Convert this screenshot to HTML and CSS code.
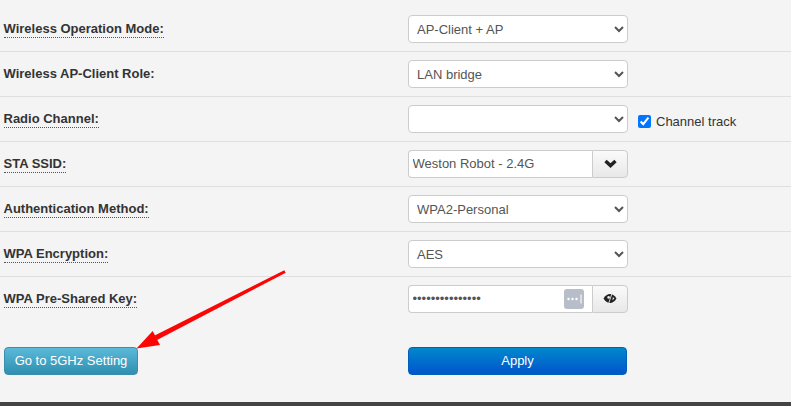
FILE: index.html
```html
<!DOCTYPE html>
<html lang="en">
<head>
<meta charset="utf-8">
<title>Wireless Settings</title>
<link rel="stylesheet" href="styles.css">
</head>
<body>
<main class="panel">
  <form class="form">
    <div class="row">
      <label class="label"><span class="hint">Wireless Operation Mode:</span></label>
      <div class="field"><select class="control"><option>AP-Client + AP</option></select></div>
    </div>
    <div class="row">
      <label class="label">Wireless AP-Client Role:</label>
      <div class="field"><select class="control"><option>LAN bridge</option></select></div>
    </div>
    <div class="row">
      <label class="label"><span class="hint">Radio Channel:</span></label>
      <div class="field">
        <select class="control"><option></option></select>
        <label class="check"><input type="checkbox" checked>Channel track</label>
      </div>
    </div>
    <div class="row">
      <label class="label"><span class="hint">STA SSID:</span></label>
      <div class="field">
        <div class="group">
          <input class="group-input" type="text" value="Weston Robot - 2.4G">
          <button type="button" class="addon" aria-label="Show networks">
            <svg width="13" height="9" viewBox="0 0 13 9"><path d="M1.500 2 L6.500 6.600 L11.500 2" fill="none" stroke="#222" stroke-width="3.400"/></svg>
          </button>
        </div>
      </div>
    </div>
    <div class="row">
      <label class="label"><span class="hint">Authentication Method:</span></label>
      <div class="field"><select class="control"><option>WPA2-Personal</option></select></div>
    </div>
    <div class="row">
      <label class="label"><span class="hint">WPA Encryption:</span></label>
      <div class="field"><select class="control"><option>AES</option></select></div>
    </div>
    <div class="row row-last">
      <label class="label"><span class="hint">WPA Pre-Shared Key:</span></label>
      <div class="field">
        <div class="group">
          <div class="password-wrap">
            <input class="group-input password" type="password" value="123456789012345">
            <span class="keys">
              <svg width="20" height="20" viewBox="0 0 20 20"><rect width="20" height="20" rx="3" fill="#b8bec9"/><circle cx="4.500" cy="10" r="1.200" fill="#fff"/><circle cx="8.500" cy="10" r="1.200" fill="#fff"/><circle cx="12.500" cy="10" r="1.200" fill="#fff"/><path d="M17 5.500v9" stroke="#fff" stroke-width="1"/></svg>
            </span>
          </div>
          <button type="button" class="addon" aria-label="Toggle password">
            <svg width="14" height="13" viewBox="0 0 14 13"><path d="M0.500 6.500 C2.200 3.600 4.500 2 7 2 C9.500 2 11.800 3.600 13.500 6.500 C11.800 9.400 9.500 11 7 11 C4.500 11 2.200 9.400 0.500 6.500Z" fill="#222"/><circle cx="5.600" cy="5.400" r="1.300" fill="#eee"/><path d="M9.900 5 L11.400 6.500 L9.500 8.300Z" fill="#eee"/><path d="M9.300 0.500 L5.300 12.500" stroke="#eee" stroke-width="0.900"/></svg>
          </button>
        </div>
      </div>
    </div>
    <div class="actions">
      <div class="action-left"><button type="button" class="btn btn-info">Go to 5GHz Setting</button></div>
      <div class="action-right"><button type="button" class="btn btn-primary">Apply</button></div>
    </div>
  </form>
  <svg class="arrow" width="791" height="406" viewBox="0 0 791 406" aria-hidden="true">
    <path d="M284.300 270.300 L285.700 272.800 L157 340 L154.700 335.500Z" fill="#fb0505"/>
    <path d="M136.500 348.500 L152.700 331 L160 345Z" fill="#fb0505"/>
  </svg>
</main>
<footer class="footer"></footer>
</body>
</html>
```
FILE: styles.css
```css
* { box-sizing: border-box; }
html, body { margin: 0; height: 100%; }
body {
  width: 791px;
  height: 406px;
  overflow: hidden;
  background: #f4f4f4;
  color: #333;
  font-family: "Liberation Sans", Arial, sans-serif;
  font-size: 13px;
  display: flex;
  flex-direction: column;
}
.panel { position: relative; flex: 1; padding-top: 7px; }
.row {
  display: grid;
  grid-template-columns: 408px 1fr;
  align-items: center;
  height: 45px;
  padding-bottom: 1px;
  border-bottom: 1px solid #dfdfdf;
}
.row-last { border-bottom: 0; padding-bottom: 2px; }
.label { padding-left: 3.5px; font-weight: 700; color: #333; }
.hint { border-bottom: 1px dotted #555; padding-bottom: 1px; }
.field { display: flex; align-items: center; }
.control {
  width: 220px;
  height: 28px;
  padding: 2px 4px 0;
  border: 1px solid #ccc;
  border-radius: 4px;
  background-color: #fff;
  color: #555;
  font: 13px "Liberation Sans", Arial, sans-serif;
}
.check { display: flex; align-items: center; margin: 6px 0 0 10px; color: #333; }
.check input { width: 13px; height: 13px; margin: 0 5px 0 0; accent-color: #0075ff; }
.group { display: flex; width: 220px; height: 28px; }
.group-input {
  width: 184px;
  height: 28px;
  padding: 0 3.5px;
  border: 1px solid #ccc;
  border-right: 0;
  border-radius: 4px 0 0 4px;
  background: #fff;
  color: #555;
  font: 13px "Liberation Sans", Arial, sans-serif;
  outline: none;
}
.password-wrap { position: relative; width: 184px; height: 28px; }
.keys { position: absolute; top: 4px; right: 8.5px; width: 20px; height: 20px; display: block; }
.keys svg { display: block; }
.addon {
  width: 36px;
  height: 28px;
  padding: 0;
  display: flex;
  align-items: center;
  justify-content: center;
  border: 1px solid #ccc;
  border-radius: 0 4px 4px 0;
  background: linear-gradient(#fafafa, #e8e8e8);
}
.actions {
  display: grid;
  grid-template-columns: 408px 219px;
  margin-top: 25px;
}
.action-left { padding-left: 4px; }
.btn {
  height: 28px;
  border-radius: 4px;
  color: #fff;
  font: 13px "Liberation Sans", Arial, sans-serif;
  padding: 0 0 1px;
}
.btn-info {
  width: 134px;
  border: 1px solid #3b8fab;
  background: linear-gradient(#5bbad9, #2f8fb0);
}
.btn-primary {
  width: 219px;
  border: 1px solid #0060b8;
  background: linear-gradient(#0088cc, #0055cc);
}
.arrow { position: absolute; top: 0; left: 0; pointer-events: none; }
.footer { height: 4px; background: #444; flex: none; }
```
